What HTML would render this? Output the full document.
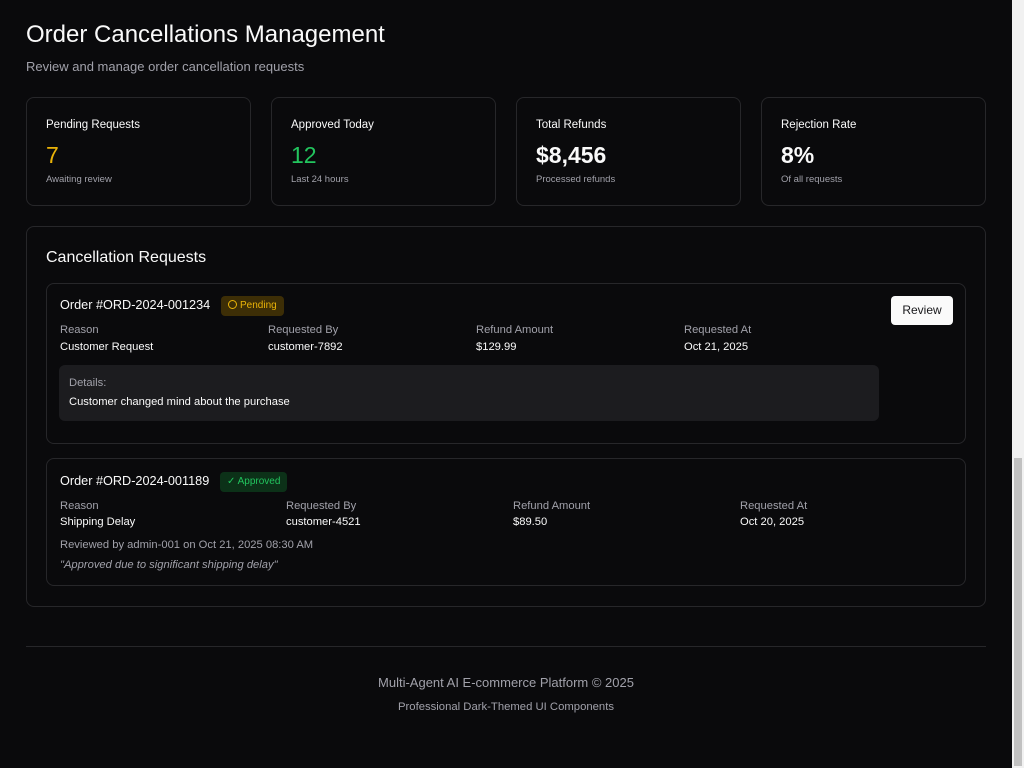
<!DOCTYPE html>
<html><head><style>
*{box-sizing:border-box;margin:0;padding:0}
html,body{width:1024px;height:768px;overflow:hidden;background:#0a0a0c;color:#fafafa;font-family:"Liberation Sans",sans-serif}
.abs{position:absolute}
.card{position:absolute;border:1px solid #27272a;border-radius:8px;background:#0a0a0c}
.muted{color:#a1a1aa}
.sb{position:absolute;left:1012px;top:0;width:12px;height:768px;background:#f1f1f1}
.th{position:absolute;left:1014px;top:458px;width:8px;height:308px;background:#c1c1c1}
.lbl{font-size:9.5px;color:#a1a1aa}
.k{font-size:11.2px;color:#a1a1aa}
.v{font-size:11.2px;color:#fafafa}
</style></head><body>
<div class="abs" style="left:26px;top:21px;font-size:24px;font-weight:500">Order Cancellations Management</div>
<div class="abs muted" style="left:26px;top:59px;font-size:13px">Review and manage order cancellation requests</div>

<div class="card" style="left:26px;top:97px;width:225px;height:109px"><div class="abs" style="left:19px;top:21px;font-size:11.5px">Pending Requests</div><div class="abs" style="left:19px;top:44px;font-size:23px;color:#eab308">7</div><div class="abs lbl" style="left:19px;top:76px">Awaiting review</div></div>
<div class="card" style="left:271px;top:97px;width:225px;height:109px"><div class="abs" style="left:19px;top:21px;font-size:11.5px">Approved Today</div><div class="abs" style="left:19px;top:44px;font-size:23px;color:#22c55e">12</div><div class="abs lbl" style="left:19px;top:76px">Last 24 hours</div></div>
<div class="card" style="left:516px;top:97px;width:225px;height:109px"><div class="abs" style="left:19px;top:21px;font-size:11.5px">Total Refunds</div><div class="abs" style="left:19px;top:44px;font-size:23px;font-weight:bold">$8,456</div><div class="abs lbl" style="left:19px;top:76px">Processed refunds</div></div>
<div class="card" style="left:761px;top:97px;width:225px;height:109px"><div class="abs" style="left:19px;top:21px;font-size:11.5px">Rejection Rate</div><div class="abs" style="left:19px;top:44px;font-size:23px;font-weight:bold">8%</div><div class="abs lbl" style="left:19px;top:76px">Of all requests</div></div>

<div class="card" style="left:26px;top:226px;width:960px;height:381px">
<div class="abs" style="left:19px;top:22px;font-size:16px;font-weight:500">Cancellation Requests</div>
</div>

<div class="card" style="left:46px;top:283px;width:920px;height:161px">
<div class="abs" style="left:13px;top:14px;font-size:12.7px;font-weight:500">Order #ORD-2024-001234</div>
<div class="abs" style="left:174px;top:12px;height:20px;padding:0 7px;border-radius:4px;background:#3d2e06;color:#eab308;font-size:10px;line-height:20px"><span style="display:inline-block;width:9px;height:9px;border:1px solid #eab308;border-radius:50%;vertical-align:-1px;margin-right:3px"></span>Pending</div>
<div class="abs k" style="left:13px;top:40px">Reason</div><div class="abs v" style="left:13px;top:57px">Customer Request</div>
<div class="abs k" style="left:221px;top:40px">Requested By</div><div class="abs v" style="left:221px;top:57px">customer-7892</div>
<div class="abs k" style="left:429px;top:40px">Refund Amount</div><div class="abs v" style="left:429px;top:57px">$129.99</div>
<div class="abs k" style="left:637px;top:40px">Requested At</div><div class="abs v" style="left:637px;top:57px">Oct 21, 2025</div>
<div class="abs" style="left:12px;top:81px;width:820px;height:56px;background:#1c1c1f;border-radius:6px">
<div class="abs k" style="left:10px;top:12px">Details:</div><div class="abs v" style="left:10px;top:31px">Customer changed mind about the purchase</div></div>
<div class="abs" style="left:844px;top:12px;width:62px;height:29px;background:#fafafa;border-radius:4px;color:#18181b;font-size:12px;text-align:center;line-height:29px">Review</div>
</div>

<div class="card" style="left:46px;top:458px;width:920px;height:128px">
<div class="abs" style="left:13px;top:15px;font-size:12.7px;font-weight:500">Order #ORD-2024-001189</div>
<div class="abs" style="left:173px;top:13px;height:20px;padding:0 7px;border-radius:4px;background:#0c3118;color:#22c55e;font-size:10px;line-height:20px">✓ Approved</div>
<div class="abs k" style="left:13px;top:41px">Reason</div><div class="abs v" style="left:13px;top:57px">Shipping Delay</div>
<div class="abs k" style="left:239px;top:41px">Requested By</div><div class="abs v" style="left:239px;top:57px">customer-4521</div>
<div class="abs k" style="left:466px;top:41px">Refund Amount</div><div class="abs v" style="left:466px;top:57px">$89.50</div>
<div class="abs k" style="left:693px;top:41px">Requested At</div><div class="abs v" style="left:693px;top:57px">Oct 20, 2025</div>
<div class="abs k" style="left:13px;top:80px">Reviewed by admin-001 on Oct 21, 2025 08:30 AM</div>
<div class="abs k" style="left:13px;top:100px;font-style:italic">"Approved due to significant shipping delay"</div>
</div>

<div class="abs" style="left:26px;top:646px;width:960px;height:1px;background:#27272a"></div>
<div class="abs muted" style="left:0;width:1012px;top:675px;text-align:center;font-size:13px">Multi-Agent AI E-commerce Platform © 2025</div>
<div class="abs muted" style="left:0;width:1012px;top:701px;text-align:center;font-size:11.3px">Professional Dark-Themed UI Components</div>
<div class="sb"></div><div class="th"></div>
</body></html>
